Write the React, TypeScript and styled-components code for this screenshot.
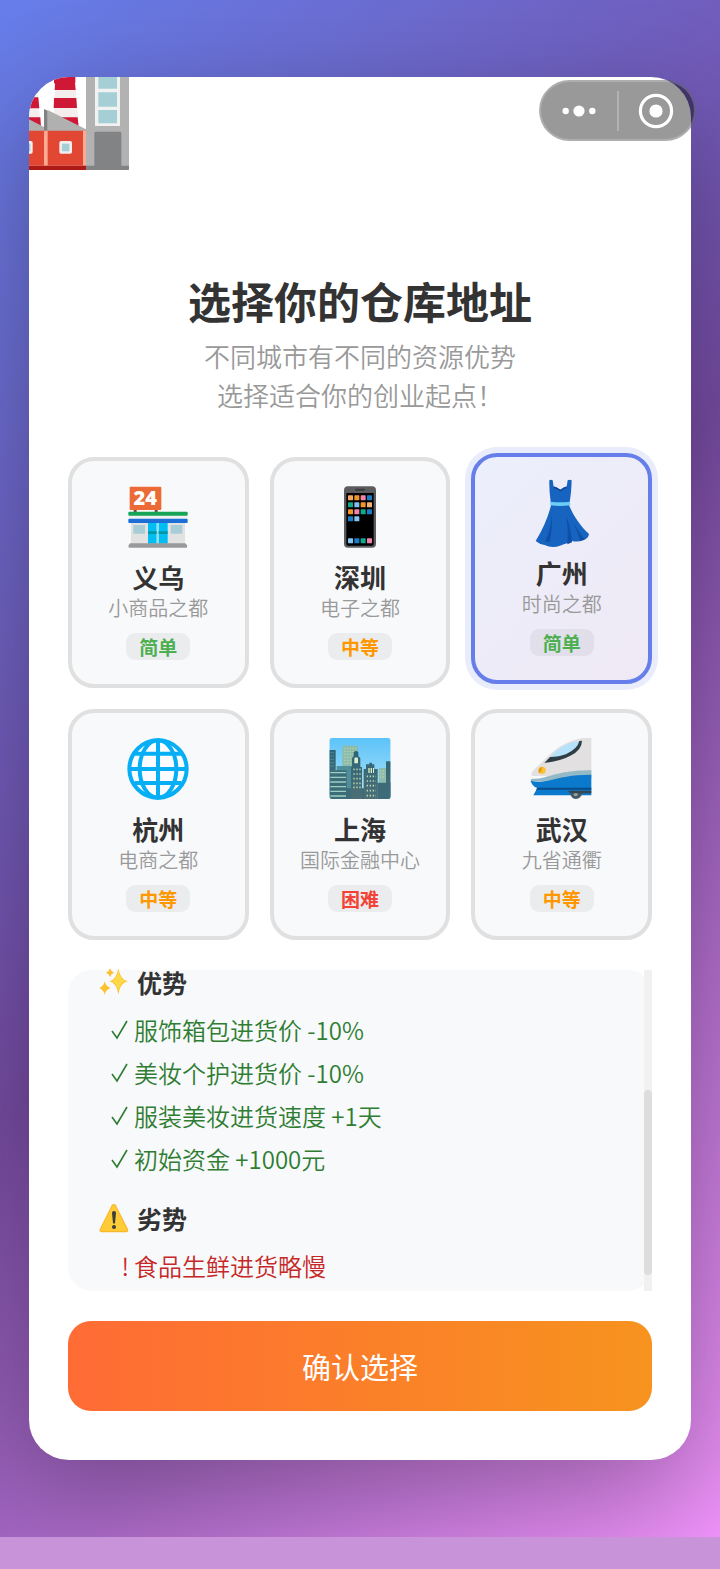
import { useState } from "react"
import type { ReactNode } from "react"
import styled, { createGlobalStyle } from "styled-components"

const GlobalStyle = createGlobalStyle`
  * {
    box-sizing: border-box;
  }

  body {
    margin: 0;
    font-family: "Noto Sans CJK SC", "Noto Sans", sans-serif;
    color: #333;
    background: #c893d8;
  }

  button {
    font-family: inherit;
    cursor: pointer;
  }
`

const Page = styled.div`
  position: relative;
  padding: 77px 29px;
  background: linear-gradient(135deg, #667eea 0%, #764ba2 50%, #f093fb 100%);
  overflow: hidden;
`

const BottomBar = styled.div`
  height: 32px;
  background: #c893d8;
`

const Capsule = styled.div`
  position: absolute;
  top: 80px;
  right: 24px;
  width: 157px;
  height: 61px;
  display: flex;
  align-items: center;
  border: 2px solid rgba(255, 255, 255, 0.2);
  border-radius: 31px;
  background: rgba(0, 0, 0, 0.4);
`

const CapsuleButton = styled.button`
  flex: 1;
  height: 100%;
  display: flex;
  align-items: center;
  justify-content: center;
  padding: 0;
  border: 0;
  background: none;
`

const CapsuleDivider = styled.span`
  width: 2px;
  height: 40px;
  background: rgba(255, 255, 255, 0.25);
`

const Sheet = styled.main`
  padding-bottom: 49px;
  border-radius: 40px;
  background: #fff;
  box-shadow: 0 36px 110px rgba(0, 0, 0, 0.3);
  overflow: hidden;

  > svg {
    display: block;
  }
`

const Content = styled.div`
  display: flex;
  flex-direction: column;
  gap: 30px;
  padding: 0 39px;
`

const Header = styled.header`
  margin: 100px 0 13px;
  text-align: center;
`

const Title = styled.h1`
  margin: 0 0 6px;
  font-size: 43px;
  line-height: 60px;
  font-weight: 700;
`

const Subtitle = styled.p`
  margin: 0;
  font-size: 26px;
  line-height: 39px;
  font-weight: 350;
  color: #999;
`

const CityGrid = styled.div`
  display: grid;
  grid-template-columns: repeat(3, 1fr);
  gap: 21px;
`

const CityCard = styled.button<{ $active: boolean }>`
  display: flex;
  flex-direction: column;
  align-items: center;
  padding: 25px 0 24px;
  border: 4px solid ${({ $active }) => ($active ? "#667eea" : "#e0e0e0")};
  border-radius: 26px;
  color: #333;
  background: ${({ $active }) =>
    $active ? "linear-gradient(135deg, #eceffc, #efe9f5) border-box" : "#f8f9fb"};
  box-shadow: ${({ $active }) => ($active ? "0 0 0 6px #e8ecfb" : "none")};
  transform: ${({ $active }) => ($active ? "translateY(-4px)" : "none")};
`

const CityIcon = styled.svg`
  width: 62px;
  height: 62px;
  margin-bottom: 11px;
  overflow: visible;
`

const CityName = styled.span`
  font-size: 26px;
  line-height: 36px;
  font-weight: 700;
`

const CityDesc = styled.span`
  font-size: 20px;
  line-height: 26px;
  font-weight: 350;
  color: #999;
`

const Badge = styled.span<{ $color: string }>`
  margin-top: 12px;
  padding: 0 13px;
  border-radius: 9px;
  font-size: 19px;
  line-height: 27px;
  font-weight: 700;
  color: ${({ $color }) => $color};
  background: rgba(0, 0, 0, 0.05);
`

const Detail = styled.section`
  display: flex;
  height: 321px;
  border-radius: 24px;
  background: #f8f9fb;
`

const DetailBody = styled.div`
  flex: 1;
  display: flex;
  flex-direction: column;
  gap: 26px;
  padding: 0 31px;
`

const ScrollTrack = styled.div`
  width: 8px;
  padding-top: 120px;
  background: #f1f1f1;
`

const ScrollThumb = styled.div`
  height: 185px;
  border-radius: 4px;
  background: #ddd;
`

const DetailTitle = styled.h2`
  display: flex;
  align-items: center;
  gap: 8px;
  height: 24px;
  margin: 0 0 14px;
  font-size: 25px;
  line-height: 26px;
  font-weight: 700;
`

const DetailIcon = styled.svg`
  width: 30px;
  height: 30px;
`

const DetailList = styled.ul<{ $color: string }>`
  margin: 0;
  padding: 0;
  list-style: none;
  font-size: 24px;
  line-height: 43px;
  font-weight: 350;
  color: ${({ $color }) => $color};
`

const DetailItem = styled.li`
  display: flex;
  gap: 5px;
`

const Mark = styled.span`
  display: flex;
  align-items: center;
  justify-content: flex-end;
  width: 30px;
`

const ConfirmButton = styled.button`
  height: 90px;
  border: 0;
  border-radius: 23px;
  font-size: 29px;
  font-weight: 400;
  color: #fff;
  background: linear-gradient(90deg, #ff6b35, #f7931e);
`

const FactoryIcon = () => (
  <svg width="100" height="93" viewBox="87 81 300 279" aria-hidden="true">
    <path d="M87 130h25l11 100H87z" fill="#f3eded" />
    <path d="M87 142h28l3 33H87zM87 202h34l2 28H87z" fill="#cf1736" />
    <path d="M166 95h60l10 140h-76z" fill="#f3eded" />
    <rect x="162" y="78" width="64" height="24" rx="5" fill="#cf1736" />
    <path d="M165 100h60l2 20h-63zM162 144h67l2 30h-70zM159 202h74l3 30h-77z" fill="#cf1736" />
    <path d="M87 208l45 23v13H87zM143 180l115 58v6H143z" fill="#b0b0b0" />
    <path d="M132 177l11 5v62h-11z" fill="#828284" />
    <path d="M258 81h129v279H258z" fill="#b2b2b2" />
    <path d="M285 81h75v147h-75z" fill="#f1f1f1" />
    <path d="M295 81h56v35h-56zM295 127h56v43h-56zM295 180h56v40h-56z" fill="#a4cfd5" />
    <path d="M283 249q0-4 4-4h73q4 0 4 4v98h23v9q0 4-4 4H258v-13h25z" fill="#828385" />
    <path d="M87 242h171v105H87z" fill="#e24733" />
    <path d="M132 242h11v105h-11zM249 242h9v105h-9z" fill="#ffab91" />
    <path d="M87 347h171v13H87z" fill="#af1a16" />
    <rect x="178" y="273" width="38" height="38" rx="5" fill="#f3eded" />
    <path d="M186 281h22v23h-22z" fill="#a4cfd5" />
    <rect x="60" y="273" width="38" height="38" rx="5" fill="#f3eded" />
    <path d="M87 281h4v23h-4z" fill="#a4cfd5" />
  </svg>
)

const StoreArt = () => (
  <>
    <path d="M225 204h9v14h-9zM288 204h9v14h-9z" fill="#6d4c41" />
    <rect x="213" y="138" width="95" height="70" rx="3" fill="#ec6a35" />
    <text x="260" y="194" fontSize="60" fontWeight="800" fontFamily="Open Sans, sans-serif" textAnchor="middle" fill="#fff">
      24
    </text>
    <path d="M217 240h162v70H217z" fill="#e2e2e2" />
    <path d="M210 225h176v10H210z" fill="#f1f1f1" />
    <rect x="209" y="213" width="178" height="12" rx="3" fill="#16a456" />
    <rect x="209" y="234" width="178" height="13" rx="3" fill="#1c6fd6" />
    <path d="M224 253h35v26h-35zM336 253h35v26h-35z" fill="#a8cdd6" />
    <path d="M268 247h26v62h-26zM300 247h27v62h-27z" fill="#00bdf2" />
    <path d="M294 247h6v62h-6z" fill="#8fe0fa" />
    <path d="M268 272h26v8h-26zM300 272h27v8h-27z" fill="#0097a7" />
    <path d="M214 308h166l5 6v7H210v-7z" fill="#9a9a9a" />
  </>
)

const phoneApps = [
  ["#f2a65e", "#ef962b", "#f082ab", "#1b7cc6"],
  ["#10a98a", "#82bdf2", "#ef962b", "#f2b277"],
  ["#ef962b", "#f082ab", "#10a98a", "#1b7cc6"],
  ["#1b7cc6", "#82c4f2"],
]
const phoneDock = ["#82c4f2", "#1b7cc6", "#10a98a", "#f082ab"]

const PhoneArt = () => (
  <>
    <rect x="852" y="137" width="96" height="184" rx="12" fill="#5c5c5f" />
    <path d="M859 157h82v153q0 5-5 5h-72q-5 0-5-5z" fill="#000" />
    <rect x="885" y="144" width="30" height="6" rx="3" fill="#39393b" />
    {phoneApps.map((row, y) =>
      row.map((color, x) => (
        <rect key={`${x}-${y}`} x={864 + x * 19} y={164 + y * 21} width="15" height="15" rx="2" fill={color} />
      ))
    )}
    {phoneDock.map((color, x) => (
      <rect key={x} x={864 + x * 19} y="293" width="15" height="15" rx="2" fill={color} />
    ))}
  </>
)

const DressArt = () => (
  <>
    <path
      d="M299 133q5-3 10 0l3 19q9 1 20 9 11-8 19-9l3-19q6-3 12 0-1 38-6 65l-2 10c14 32 32 60 60 86q-1 13-18 19-15 6-33 2-12 6-36 14-24 9-46-2-14-1-27-12c22-36 37-70 46-107l-1-10q-5-36-4-65z"
      fill="#1663c0"
    />
    <path d="M312 151q10 2 20 10 10-8 20-10l-2 6q-11 3-18 10-8-7-18-10z" fill="#0d4798" />
    <path d="M307 232q-3 50-20 84l13 3q8-40 7-87zM350 240q7 50 3 85l14-6q-3-40-17-79zM372 262q12 28 20 52l13-3q-20-24-33-49z" fill="#0f4fa5" />
    <path d="M303 197q30 4 58 0l1 11q-31 4-60 0z" fill="#6ccdf6" />
  </>
)

const GlobeArt = () => (
  <>
    <circle cx="297" cy="207" r="86" fill="#fafcff" />
    <g fill="none" stroke="#06aef5" strokeWidth="12">
      <circle cx="297" cy="207" r="86" />
      <ellipse cx="297" cy="207" rx="55" ry="86" />
      <path d="M297 121v172M211 207h172M227 161h140M227 249h140" />
    </g>
  </>
)

const CityArt = () => (
  <>
    <defs>
      <linearGradient id="sky" x1="0" y1="0" x2="0" y2="1">
        <stop offset="0" stopColor="#5cc3f8" />
        <stop offset="1" stopColor="#b4e4fa" />
      </linearGradient>
      <linearGradient id="tower" x1="0" y1="0" x2="0" y2="1">
        <stop offset="0" stopColor="#2b6577" />
        <stop offset="1" stopColor="#4d6e74" />
      </linearGradient>
      <clipPath id="frame">
        <rect x="808" y="114" width="184" height="183" rx="9" />
      </clipPath>
    </defs>
    <g clipPath="url(#frame)">
      <path d="M808 114h184v183H808z" fill="url(#sky)" />
      <path d="M847 137h47v160h-47zM957 204h22v93h-22z" fill="#8cbcae" />
      <path d="M853 145h35M853 154h35M853 163h35M853 172h35M853 181h35M853 190h35M960 213h17M960 222h17M960 231h17" stroke="#c5d5a1" strokeWidth="3" strokeDasharray="4 4" />
      <path d="M830 198h50v99h-50z" fill="#4f8f9b" />
      <path d="M808 150h19v62h-19zM873 297v-96h3v-27l5-5v-12q7-8 14 0v12l6 5v27h5v96zM911 297v-90h7v-14h10v-5h8v5h7v14h10v90zM978 184h14v113h-14z" fill="url(#tower)" />
      <path d="M808 211h52v54h13v32H808zM906 265h6v32h-6zM952 248h40v49h-40z" fill="#3d6c78" />
      <path d="M811 218h47M811 232h47M811 246h47M811 260h47M811 274h47M811 288h47" stroke="#9cd0c4" strokeWidth="4" />
      <path d="M883 175q6-6 11 0v15h-11zM925 204h4v15h-4zM932 204h4v15h-4zM939 204h3v15h-3z" fill="#d8efcb" />
      <path d="M880 208h22M880 222h22M880 236h22M880 250h22M880 262h22M920 229h28M920 243h28M920 257h28M920 272h28M920 287h28" stroke="#b9d8b6" strokeWidth="5" strokeDasharray="4 5" />
      <path d="M812 158h12M812 168h12M812 178h12M812 188h12M812 198h12" stroke="#69a5af" strokeWidth="3" strokeDasharray="3 3" />
    </g>
  </>
)

const TrainArt = () => (
  <>
    <path d="M425 113v115H247q-4-8 2-14 6-8 16-16 12-12 28-27c26-26 60-49 103-56z" fill="#e2e0e1" />
    <path d="M300 174q37-46 89-51-4 22-33 37-22 11-56 14z" fill="#b5e1fb" />
    <path d="M284 189l17-18q27 0 49-9 34-16 39-39l8-1q0 28-35 45-26 15-78 22z" fill="#2e3d46" />
    <path d="M425 211v24l-182 10q-1-7 4-9 14 2 38-4c40-11 70-21 140-21z" fill="#93b9c6" />
    <path d="M425 224v62H251l12-22q-16-5-20-22 20 6 50 0c42-9 70-18 132-18z" fill="#0b79cc" />
    <path d="M263 263h162v6H259z" fill="#0a4c8a" />
    <ellipse cx="277" cy="211" rx="11" ry="11" fill="#fbc22d" />
    <path d="M276 201q-11 3-9 18 8 0 11-18z" fill="#e59a1c" />
    <path d="M361 278h37q-3 18-20 19-14-1-17-19z" fill="#455a64" />
    <circle cx="378" cy="283" r="6" fill="#90a4ae" />
    <path d="M355 272h70v8h-64z" fill="#37474f" />
  </>
)

const SparklesIcon = () => (
  <DetailIcon viewBox="117 24 90 90" aria-hidden="true">
    <g fill="#fdc02f">
      <path d="M175 28q5 33 28 39-23 6-28 39-5-33-26-39 21-6 26-39z" />
      <path d="M134 67q4 15 18 20-15 5-18 20-4-15-17-20 14-4 17-20z" />
      <path d="M150 28q3 10 12 13-9 3-12 13-3-10-12-13 9-3 12-13z" />
    </g>
    <path d="M175 36q6 26 22 31-16 4-22 29-6-25-20-29 14-5 20-31z" fill="#fdd94a" />
  </DetailIcon>
)

const WarningIcon = () => (
  <DetailIcon viewBox="117 732 90 90" aria-hidden="true">
    <path d="M155 739q7-9 13 0l36 72q3 8-6 9h-73q-9-1-6-9z" fill="#f9b72b" />
    <path d="M157 742q5-7 9 0l35 70q2 4-4 4h-71q-5 0-4-4z" fill="#ffcb36" />
    <path d="M156 762q0-6 6-6t6 6l-3 30q-3 4-6 0z" fill="#3c3c3c" />
    <circle cx="162" cy="804" r="6" fill="#3c3c3c" />
  </DetailIcon>
)

const CheckIcon = () => (
  <svg width="18" height="20" viewBox="0 0 18 20" role="img" aria-label="✓">
    <path d="M1 11l5 7L16 1" fill="none" stroke="currentColor" strokeWidth="1.6" />
  </svg>
)

const levels = {
  easy: { label: "简单", color: "#4caf50" },
  normal: { label: "中等", color: "#ff9800" },
  hard: { label: "困难", color: "#f44336" },
}

type City = {
  name: string
  desc: string
  level: keyof typeof levels
  viewBox: string
  art: ReactNode
}

const cities: City[] = [
  { name: "义乌", desc: "小商品之都", level: "easy", viewBox: "205 136 186 186", art: <StoreArt /> },
  { name: "深圳", desc: "电子之都", level: "normal", viewBox: "807 136 186 186", art: <PhoneArt /> },
  { name: "广州", desc: "时尚之都", level: "easy", viewBox: "244 138 186 186", art: <DressArt /> },
  { name: "杭州", desc: "电商之都", level: "normal", viewBox: "204 114 186 186", art: <GlobeArt /> },
  { name: "上海", desc: "国际金融中心", level: "hard", viewBox: "807 114 186 186", art: <CityArt /> },
  { name: "武汉", desc: "九省通衢", level: "normal", viewBox: "244 114 186 186", art: <TrainArt /> },
]

const pros = ["服饰箱包进货价 -10%", "美妆个护进货价 -10%", "服装美妆进货速度 +1天", "初始资金 +1000元"]
const cons = ["食品生鲜进货略慢"]

function App() {

  const [selected, setSelected] = useState<string>("广州")

  return (
    <>
      <GlobalStyle />
      <Page>
        <Sheet>
          <FactoryIcon />
          <Content>
            <Header>
              <Title>选择你的仓库地址</Title>
              <Subtitle>
                不同城市有不同的资源优势
                <br />
                选择适合你的创业起点！
              </Subtitle>
            </Header>

            <CityGrid>
              {cities.map((city) => (
                <CityCard
                  key={city.name}
                  type="button"
                  $active={city.name === selected}
                  aria-pressed={city.name === selected}
                  onClick={() => setSelected(city.name)}
                >
                  <CityIcon viewBox={city.viewBox} aria-hidden="true">{city.art}</CityIcon>
                  <CityName>{city.name}</CityName>
                  <CityDesc>{city.desc}</CityDesc>
                  <Badge $color={levels[city.level].color}>{levels[city.level].label}</Badge>
                </CityCard>
              ))}
            </CityGrid>

            <Detail>
              <DetailBody>
                <div>
                  <DetailTitle><SparklesIcon />优势</DetailTitle>
                  <DetailList $color="#2e7d32">
                    {pros.map((text) => (
                      <DetailItem key={text}><Mark><CheckIcon /></Mark>{text}</DetailItem>
                    ))}
                  </DetailList>
                </div>
                <div>
                  <DetailTitle><WarningIcon />劣势</DetailTitle>
                  <DetailList $color="#c62828">
                    {cons.map((text) => (
                      <DetailItem key={text}><Mark>!</Mark>{text}</DetailItem>
                    ))}
                  </DetailList>
                </div>
              </DetailBody>
              <ScrollTrack>
                <ScrollThumb />
              </ScrollTrack>
            </Detail>

            <ConfirmButton type="button">确认选择</ConfirmButton>
          </Content>
        </Sheet>

        <Capsule>
          <CapsuleButton type="button" aria-label="更多">
            <svg width="34" height="12" viewBox="0 0 34 12" fill="#fff">
              <circle cx="3.7" cy="6" r="3.2" />
              <circle cx="17" cy="6" r="5.6" />
              <circle cx="30.3" cy="6" r="3.2" />
            </svg>
          </CapsuleButton>
          <CapsuleDivider />
          <CapsuleButton type="button" aria-label="关闭">
            <svg width="36" height="36" viewBox="0 0 36 36">
              <circle cx="18" cy="18" r="15.6" fill="none" stroke="#fff" strokeWidth="3.2" />
              <circle cx="18" cy="18" r="6.6" fill="#fff" />
            </svg>
          </CapsuleButton>
        </Capsule>
      </Page>
      <BottomBar />
    </>
  )
}

export default App
